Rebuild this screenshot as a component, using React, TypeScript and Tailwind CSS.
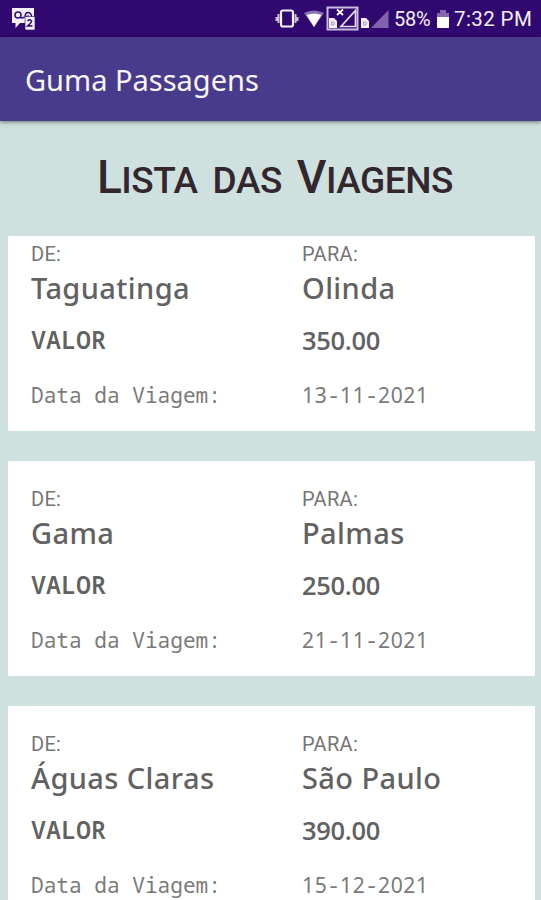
import { Fragment } from "react";

const viagens = [
  { de: "Taguatinga", para: "Olinda", valor: "350.00", data: "13-11-2021" },
  { de: "Gama", para: "Palmas", valor: "250.00", data: "21-11-2021" },
  { de: "Águas Claras", para: "São Paulo", valor: "390.00", data: "15-12-2021" },
];

function ChatIcon() {
  return (
    <svg className="ml-3 h-6 w-6" viewBox="0 0 24 24">
      <path d="M0 1h22v15H8l-4.500 5v-5H0z" fill="#f4f0fa" />
      <g fill="none" stroke="#300870" strokeWidth="1.500">
        <circle cx="6" cy="8" r="3" />
        <path d="M8 10q2 2 4 0M13 10.500q0-5 3-5t4 5M13 10l4-1" />
      </g>
      <rect x="13" y="9.500" width="10" height="13.500" rx="1" fill="#f4f0fa" stroke="#300870" strokeWidth=".6" />
      <path d="M15.500 14q2.500-2.500 4 0 0 2-4 5h5" fill="none" stroke="#300870" strokeWidth="1.500" />
    </svg>
  );
}

function SignalIcons() {
  return (
    <svg className="h-[37px] w-[114px] shrink-0" viewBox="276 0 114 37">
      <rect x="282" y="10.500" width="12" height="16" rx="2" fill="none" stroke="#f4f0fa" strokeWidth="2.200" />
      <path d="M279.500 14v9M296.500 14v9M277.500 17v4M298.500 17v4" stroke="#cfc2e0" strokeWidth="2" />
      <path d="M305 13q10-5 20 0l-10 14z" fill="#8d70b4" />
      <path d="M307.500 15q7.500-3 15 0L315 27z" fill="#fff" />
      <rect x="328.500" y="7.500" width="30" height="22" fill="#300870" stroke="#c8bddd" strokeWidth="2" />
      <path d="M342 26.500h14.500V10.500z" fill="none" stroke="#e5ddef" strokeWidth="1.700" />
      <path d="m338 9.500 6 5.500m0-5.500-6 5.500" stroke="#fff" strokeWidth="1.700" />
      <path d="M330 18h5l3 3v7h-8zM362 18h5l3 3v7h-8z" fill="#f4f0fa" />
      <path d="M332.500 22h2.500v3h-2.500zM364.500 22h2.500v3h-2.500z" fill="none" stroke="#a892c8" />
      <path d="M372 28h17.500V10z" fill="#8162ad" />
    </svg>
  );
}

function StatusBar() {
  return (
    <div className="flex h-[37px] shrink-0 items-center justify-between bg-[#300870] font-['Roboto',sans-serif] text-[#f4f0fa]">
      <ChatIcon />
      <div className="flex h-full items-center pr-[9px]">
        <SignalIcons />
        <span className="ml-[5px] w-[38px] whitespace-nowrap pt-px text-[20px] tracking-[-0.2px]">58%</span>
        <svg className="ml-[5px] h-5 w-3 shrink-0" viewBox="0 0 12 20">
          <path d="M3 1h6v3h3v5H0V4h3z" fill="#8568ab" />
          <path d="M0 8h12v10q0 1-1 1H1q-1 0-1-1z" fill="#fff" />
        </svg>
        <span className="ml-[5px] w-[78px] whitespace-nowrap pt-px text-[20.500px] tracking-[0.4px]">7:32 PM</span>
      </div>
    </div>
  );
}

// Digits are spaced to the monospace pitch, the hyphens come from the mono font
function DataViagem({ data }: { data: string }) {
  return (
    <span className="font-['Noto_Sans',sans-serif] text-[21.100px] tracking-[0.6px] text-[#7a7a7a]">
      {data.split("-").map((parte, i) => (
        <Fragment key={i}>
          {i > 0 && <span className="font-['Noto_Sans_Mono',monospace] tracking-normal">-</span>}
          {parte}
        </Fragment>
      ))}
    </span>
  );
}

type Viagem = (typeof viagens)[number];

function ViagemCard({ viagem }: { viagem: Viagem }) {
  return (
    <div className="grid h-[215px] shrink-0 grid-cols-[271px_1fr] grid-rows-[24px_45px_60px_49px] content-start items-center whitespace-nowrap bg-white pl-[23px] pt-[25px] text-[#626262]">
      <span className="pt-px font-['Roboto',sans-serif] text-[20px] tracking-[0.3px] text-[#757575]">DE:</span>
      <span className="pt-px font-['Roboto',sans-serif] text-[20px] tracking-[0.3px] text-[#757575]">PARA:</span>
      <span className="font-['Noto_Sans',sans-serif] text-[29px] font-medium tracking-[0.4px]">{viagem.de}</span>
      <span className="font-['Noto_Sans',sans-serif] text-[29px] font-medium tracking-[0.4px]">{viagem.para}</span>
      <span className="font-['Noto_Sans_Mono',monospace] text-[25px] font-semibold">VALOR</span>
      <span className="font-['Open_Sans',sans-serif] text-[25.500px] font-semibold tracking-[-0.3px]">{viagem.valor}</span>
      <span className="font-['Noto_Sans_Mono',monospace] text-[21.100px] text-[#7a7a7a]">Data da Viagem:</span>
      <DataViagem data={viagem.data} />
    </div>
  );
}

export default function App() {
  return (
    <div className="flex h-[900px] w-[541px] flex-col overflow-hidden bg-[#cfe1de]">
      <StatusBar />
      <header className="relative flex h-[84px] shrink-0 items-center bg-[#483b8b] pl-[25px] pt-[2px] shadow-[0_1px_4px_rgba(0,0,0,0.5)]">
        <h1 className="whitespace-nowrap font-['Noto_Sans',sans-serif] text-[29px] text-[#f8f6fc]">Guma Passagens</h1>
      </header>
      <h2 className="flex h-[115px] shrink-0 items-baseline gap-[15px] whitespace-nowrap pl-[97px] pt-[22px] font-['Roboto',sans-serif] text-[37px] font-medium tracking-[-0.5px] text-[#33272d]">
        <span><span className="text-[46px]">L</span>ISTA</span>
        <span>DAS</span>
        <span><span className="text-[46px]">V</span>IAGENS</span>
      </h2>
      <main className="min-h-0 flex-1 overflow-hidden pl-2 pr-[6px]">
        <div className="-mt-5 flex flex-col gap-[30px]">
          {viagens.map((viagem) => (
            <ViagemCard key={viagem.data} viagem={viagem} />
          ))}
        </div>
      </main>
    </div>
  );
}
